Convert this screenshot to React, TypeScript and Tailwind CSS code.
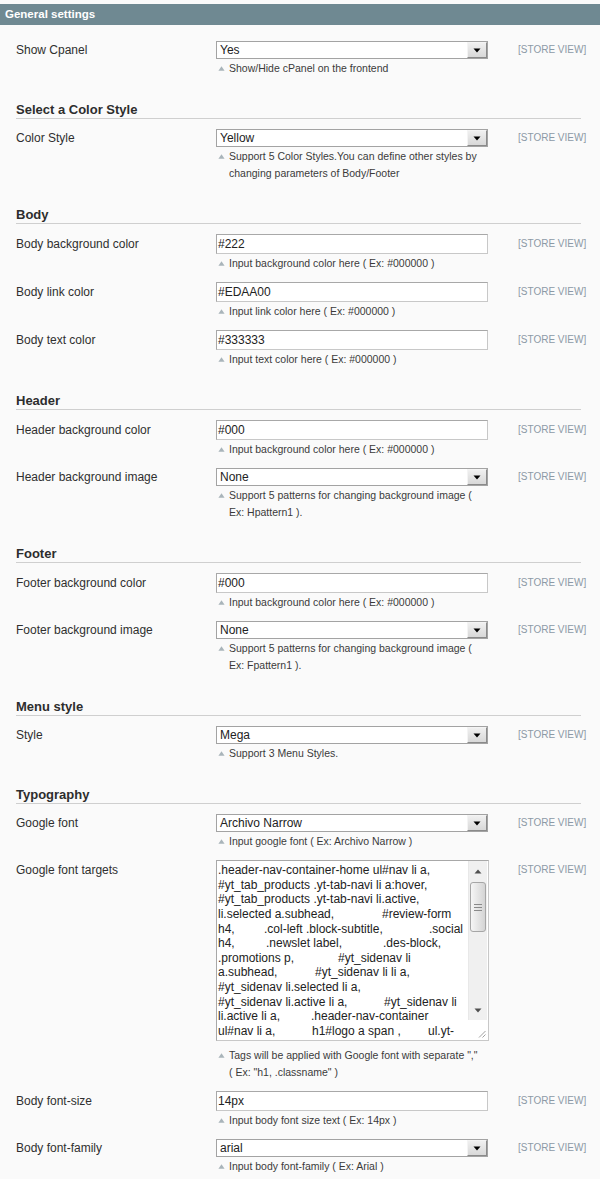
import React from 'react';

type Row = {
  label: string;
  kind: 'input' | 'select' | 'textarea';
  value?: string;
  note: string[];
};

type Section = {
  title?: string;
  rows: Row[];
};

const sections: Section[] = [
  {
    rows: [{ label: 'Show Cpanel', kind: 'select', value: 'Yes', note: ['Show/Hide cPanel on the frontend'] }],
  },
  {
    title: 'Select a Color Style',
    rows: [
      {
        label: 'Color Style',
        kind: 'select',
        value: 'Yellow',
        note: ['Support 5 Color Styles.You can define other styles by', 'changing parameters of Body/Footer'],
      },
    ],
  },
  {
    title: 'Body',
    rows: [
      { label: 'Body background color', kind: 'input', value: '#222', note: ['Input background color here ( Ex: #000000 )'] },
      { label: 'Body link color', kind: 'input', value: '#EDAA00', note: ['Input link color here ( Ex: #000000 )'] },
      { label: 'Body text color', kind: 'input', value: '#333333', note: ['Input text color here ( Ex: #000000 )'] },
    ],
  },
  {
    title: 'Header',
    rows: [
      { label: 'Header background color', kind: 'input', value: '#000', note: ['Input background color here ( Ex: #000000 )'] },
      {
        label: 'Header background image',
        kind: 'select',
        value: 'None',
        note: ['Support 5 patterns for changing background image (', 'Ex: Hpattern1 ).'],
      },
    ],
  },
  {
    title: 'Footer',
    rows: [
      { label: 'Footer background color', kind: 'input', value: '#000', note: ['Input background color here ( Ex: #000000 )'] },
      {
        label: 'Footer background image',
        kind: 'select',
        value: 'None',
        note: ['Support 5 patterns for changing background image (', 'Ex: Fpattern1 ).'],
      },
    ],
  },
  {
    title: 'Menu style',
    rows: [{ label: 'Style', kind: 'select', value: 'Mega', note: ['Support 3 Menu Styles.'] }],
  },
  {
    title: 'Typography',
    rows: [
      { label: 'Google font', kind: 'select', value: 'Archivo Narrow', note: ['Input google font ( Ex: Archivo Narrow )'] },
      {
        label: 'Google font targets',
        kind: 'textarea',
        note: ['Tags will be applied with Google font with separate ","', '( Ex: "h1, .classname" )'],
      },
      { label: 'Body font-size', kind: 'input', value: '14px', note: ['Input body font size text ( Ex: 14px )'] },
      { label: 'Body font-family', kind: 'select', value: 'arial', note: ['Input body font-family ( Ex: Arial )'] },
    ],
  },
];

function Seg({ w, children }: { w: string; children: React.ReactNode }) {
  return <span className={`inline-block ${w}`}>{children}</span>;
}

function SelectBox({ value }: { value: string }) {
  return (
    <div className="flex h-[18px] w-[272px] border border-[#a3a3a3] bg-white">
      <div className="flex-1 pl-[3px] text-[12px] leading-[16px] text-[#222]">{value}</div>
      <div className="flex w-[20px] items-center justify-center border border-[#f4f4f4] border-r-[#8a8a8a] border-b-[#8a8a8a] bg-gradient-to-b from-[#f0f0f0] to-[#d8d8d8]">
        <svg width="8" height="5" viewBox="0 0 8 5">
          <path d="M0.5 0.5 H7.5 L4 4.5 Z" fill="#000" />
        </svg>
      </div>
    </div>
  );
}

function InputBox({ value }: { value: string }) {
  return (
    <div className="h-[20px] w-[272px] border border-[#a8a8a8] border-r-[#c8c8c8] border-b-[#c8c8c8] bg-white pl-[1px] text-[12px] leading-[18px] text-[#222]">
      {value}
    </div>
  );
}

function TextareaBox() {
  return (
    <div className="flex h-[181px] w-[273px] border border-[#a8a8a8] border-r-[#c8c8c8] border-b-[#c8c8c8] bg-white">
      <div className="flex-1 overflow-hidden whitespace-nowrap pl-[1px] pt-[2px] text-[12px] leading-[14.64px] text-[#222]">
        <div>.header-nav-container-home ul#nav li a,</div>
        <div>#yt_tab_products .yt-tab-navi li a:hover,</div>
        <div>#yt_tab_products .yt-tab-navi li.active,</div>
        <div>
          <Seg w="w-[164px]">li.selected a.subhead,</Seg>#review-form
        </div>
        <div>
          <Seg w="w-[46px]">h4,</Seg>
          <Seg w="w-[165px]">.col-left .block-subtitle,</Seg>.social
        </div>
        <div>
          <Seg w="w-[48px]">h4,</Seg>
          <Seg w="w-[117px]">.newslet label,</Seg>.des-block,
        </div>
        <div>
          <Seg w="w-[120px]">.promotions p,</Seg>#yt_sidenav li
        </div>
        <div>
          <Seg w="w-[97px]">a.subhead,</Seg>#yt_sidenav li li a,
        </div>
        <div>#yt_sidenav li.selected li a,</div>
        <div>
          <Seg w="w-[166px]">#yt_sidenav li.active li a,</Seg>#yt_sidenav li
        </div>
        <div>
          <Seg w="w-[93px]">li.active li a,</Seg>.header-nav-container
        </div>
        <div>
          <Seg w="w-[94px]">ul#nav li a,</Seg>
          <Seg w="w-[116px]">h1#logo a span ,</Seg>ul.yt-
        </div>
      </div>
      <div className="mr-[1px] flex w-[19px] flex-col">
        <div className="flex flex-1 flex-col border-l border-[#e8e8e8] bg-[#f0f0f0]">
          <div className="flex h-[20px] items-center justify-center">
            <svg width="8" height="5" viewBox="0 0 8 5">
              <path d="M0.5 4.5 H7.5 L4 0.5 Z" fill="#505050" />
            </svg>
          </div>
          <div className="flex-1 px-[1px] pt-[1px]">
            <div className="flex h-[50px] items-center justify-center rounded-[3px] border border-[#a6a6a6] bg-gradient-to-r from-[#f6f6f6] to-[#d4d4d4]">
              <svg width="8" height="7" viewBox="0 0 8 7">
                <path d="M0 0.5 H8 M0 3.5 H8 M0 6.5 H8" stroke="#8a8a8a" strokeWidth="1" />
              </svg>
            </div>
          </div>
          <div className="flex h-[20px] items-center justify-center">
            <svg width="8" height="5" viewBox="0 0 8 5">
              <path d="M0.5 0.5 H7.5 L4 4.5 Z" fill="#505050" />
            </svg>
          </div>
        </div>
        <div className="flex h-[20px] items-end justify-end bg-white pb-[2px] pr-[1px]">
          <svg width="8" height="8" viewBox="0 0 8 8">
            <path d="M7.5 1 L1 7.5 M7.5 4.5 L4.5 7.5" stroke="#a0a0a0" strokeWidth="1" />
          </svg>
        </div>
      </div>
    </div>
  );
}

function Note({ lines, top }: { lines: string[]; top: string }) {
  return (
    <div className={`flex ${top}`}>
      <span className="flex w-[13px] shrink-0 pl-[2px] pt-[6px]">
        <svg width="7" height="5" viewBox="0 0 7 5">
          <path d="M3.5 0.3 L6.6 4.7 H0.4 Z" fill="#a9b4ba" />
        </svg>
      </span>
      <div className="whitespace-nowrap text-[10.5px] leading-[17px] text-[#3a3a3a]">
        {lines.map((l) => (
          <div key={l}>{l}</div>
        ))}
      </div>
    </div>
  );
}

function ConfigRow({ row }: { row: Row }) {
  const lead =
    row.kind === 'select' ? 'leading-[18px]' : 'leading-[20px]';
  return (
    <div className="flex items-start pb-[10px]">
      <div className={`w-[200px] shrink-0 whitespace-nowrap text-[12px] text-[#2f2f2f] ${lead}`}>{row.label}</div>
      <div className="w-[273px] shrink-0">
        {row.kind === 'select' && <SelectBox value={row.value ?? ''} />}
        {row.kind === 'input' && <InputBox value={row.value ?? ''} />}
        {row.kind === 'textarea' && <TextareaBox />}
        <Note lines={row.note} top={row.kind === 'textarea' ? 'mt-[6px]' : 'mt-[1px]'} />
      </div>
      <div className={`ml-[29px] shrink-0 whitespace-nowrap text-[10px] text-[#8c99a6] ${lead}`}>[STORE VIEW]</div>
    </div>
  );
}

export default function App() {
  return (
    <div className="min-h-[1179px] w-[600px] overflow-hidden bg-[#fafafa] pt-[4px] font-['Liberation_Sans',Arial,sans-serif]">
      <div className="h-[21px] bg-[#6f8992] pl-[5px] text-[11.5px] font-bold leading-[21px] text-white">
        General settings
      </div>
      <div className="pl-[16px] pr-[19px] pt-[16px]">
        {sections.map((s, i) => (
          <div key={i}>
            {s.title && (
              <h4 className="mb-[10px] mt-[15px] border-b border-[#cfcfcf] text-[13px] font-bold leading-[16px] text-[#2d2d2d]">
                {s.title}
              </h4>
            )}
            {s.rows.map((r) => (
              <ConfigRow key={r.label} row={r} />
            ))}
          </div>
        ))}
      </div>
    </div>
  );
}
